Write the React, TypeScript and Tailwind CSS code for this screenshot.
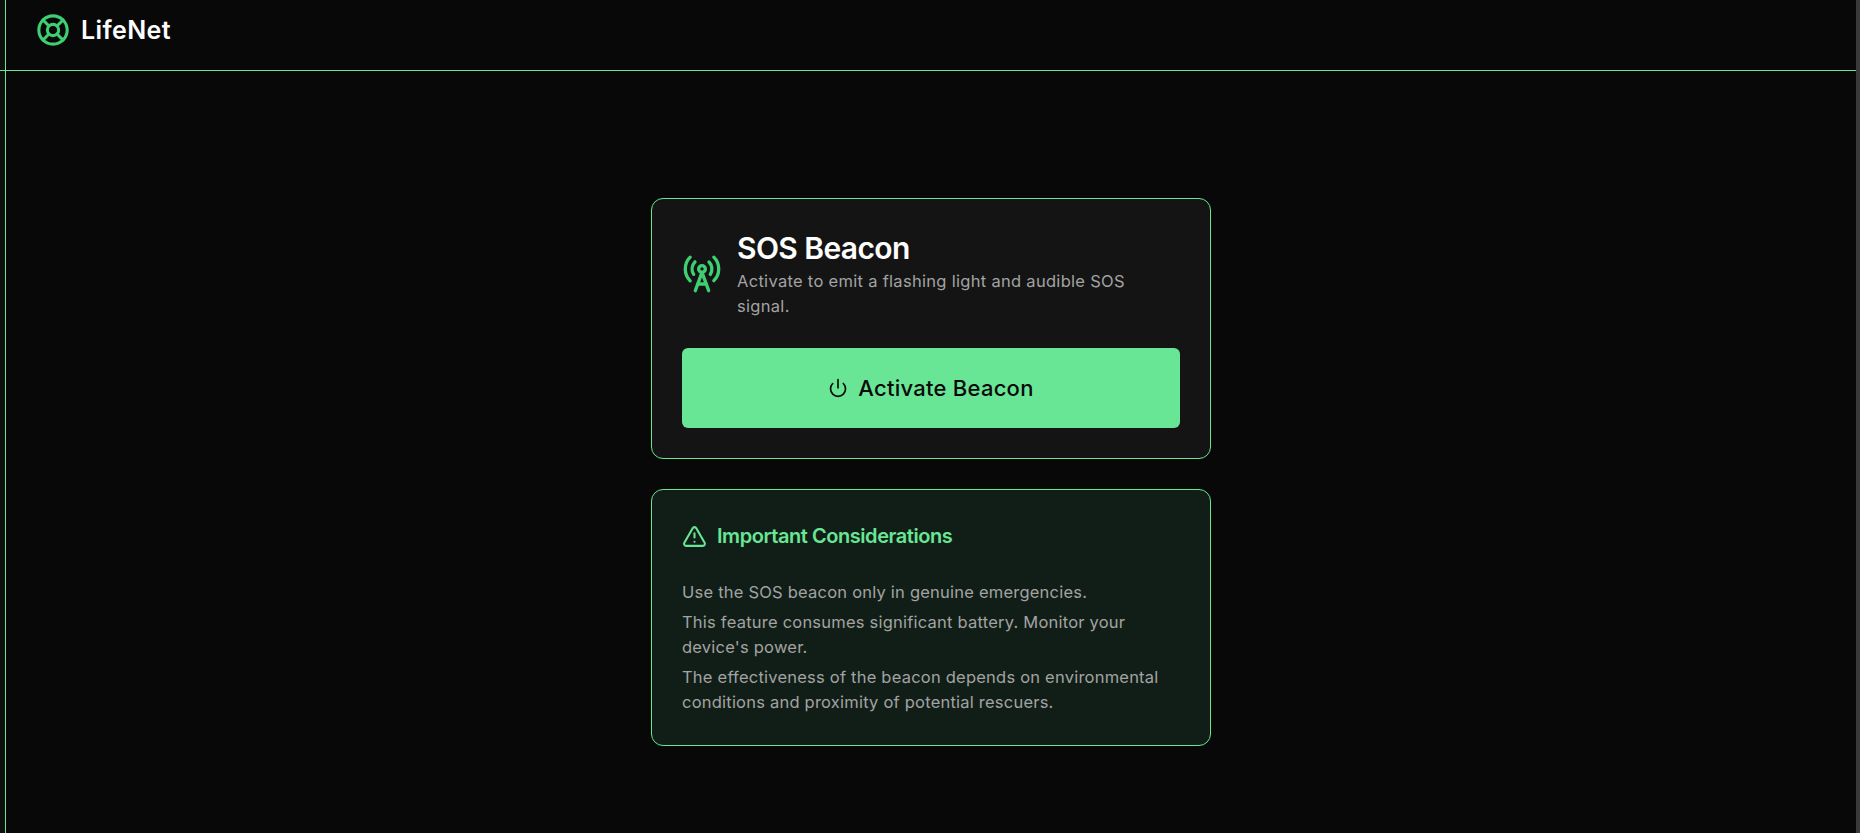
import { LifeBuoy, RadioTower, Power, TriangleAlert } from "lucide-react";

export default function App() {
  return (
    <div className="flex h-[833px] w-[1860px] overflow-hidden bg-[#080808] font-['Inter',sans-serif]">
      <div className="w-[5px] shrink-0 bg-[#0f0f0f] pt-[70px]">
        <div className="h-px bg-[#69e695]" />
      </div>
      <div className="flex min-w-0 flex-1 flex-col border-l border-[#69e695]">
        <header className="flex h-[71px] shrink-0 items-center gap-[11px] border-b border-[#69e695] px-[30px] pb-[10px]">
          <LifeBuoy className="h-[34px] w-[34px] text-[#3ecf72]" strokeWidth={2.2} />
          <span className="mt-[2px] text-[25px] font-semibold tracking-[0.4px] text-white">LifeNet</span>
        </header>
        <main className="flex flex-1 flex-col items-center gap-[30px] pt-[127px]">
          <section className="w-[560px] rounded-xl border border-[#69e695] bg-[#141414] p-[30px]">
            <div className="flex items-center gap-[15px]">
              <RadioTower className="h-10 w-10 shrink-0 text-[#3ecf72]" strokeWidth={2} />
              <div className="pt-px">
                <h1 className="text-[30px] leading-[36px] font-semibold tracking-[-0.6px] text-white">SOS Beacon</h1>
                <p className="mt-[3px] max-w-[420px] text-[16.5px] leading-[25px] tracking-[0.3px] text-[#a3a3a3]">Activate to emit a flashing light and audible SOS signal.</p>
              </div>
            </div>
            <button className="mt-[29px] flex h-20 w-full items-center justify-center gap-[10px] rounded-md bg-[#69e695] text-[22px] font-[450] tracking-[0.25px] text-[#0a0a0a]">
              <Power className="h-5 w-5" strokeWidth={2} />
              Activate Beacon
            </button>
          </section>
          <section className="w-[560px] rounded-xl border border-[#69e695] bg-[#111e17] px-[30px] pt-[32px] pb-[30px]">
            <div className="flex items-center gap-[10px]">
              <TriangleAlert className="h-[25px] w-[25px] text-[#69e695]" strokeWidth={2} />
              <h2 className="text-[20px] leading-7 font-semibold tracking-[-0.45px] text-[#69e695]">Important Considerations</h2>
            </div>
            <div className="mt-[30px] flex flex-col gap-[5px] text-[16.5px] leading-[25px] tracking-[0.22px] text-[#a3a3a3]">
              <p>Use the SOS beacon only in genuine emergencies.</p>
              <p>This feature consumes significant battery. Monitor your device's power.</p>
              <p>The effectiveness of the beacon depends on environmental conditions and proximity of potential rescuers.</p>
            </div>
          </section>
        </main>
      </div>
      <div className="w-1 shrink-0 bg-[#3a3a3a]" />
    </div>
  );
}
